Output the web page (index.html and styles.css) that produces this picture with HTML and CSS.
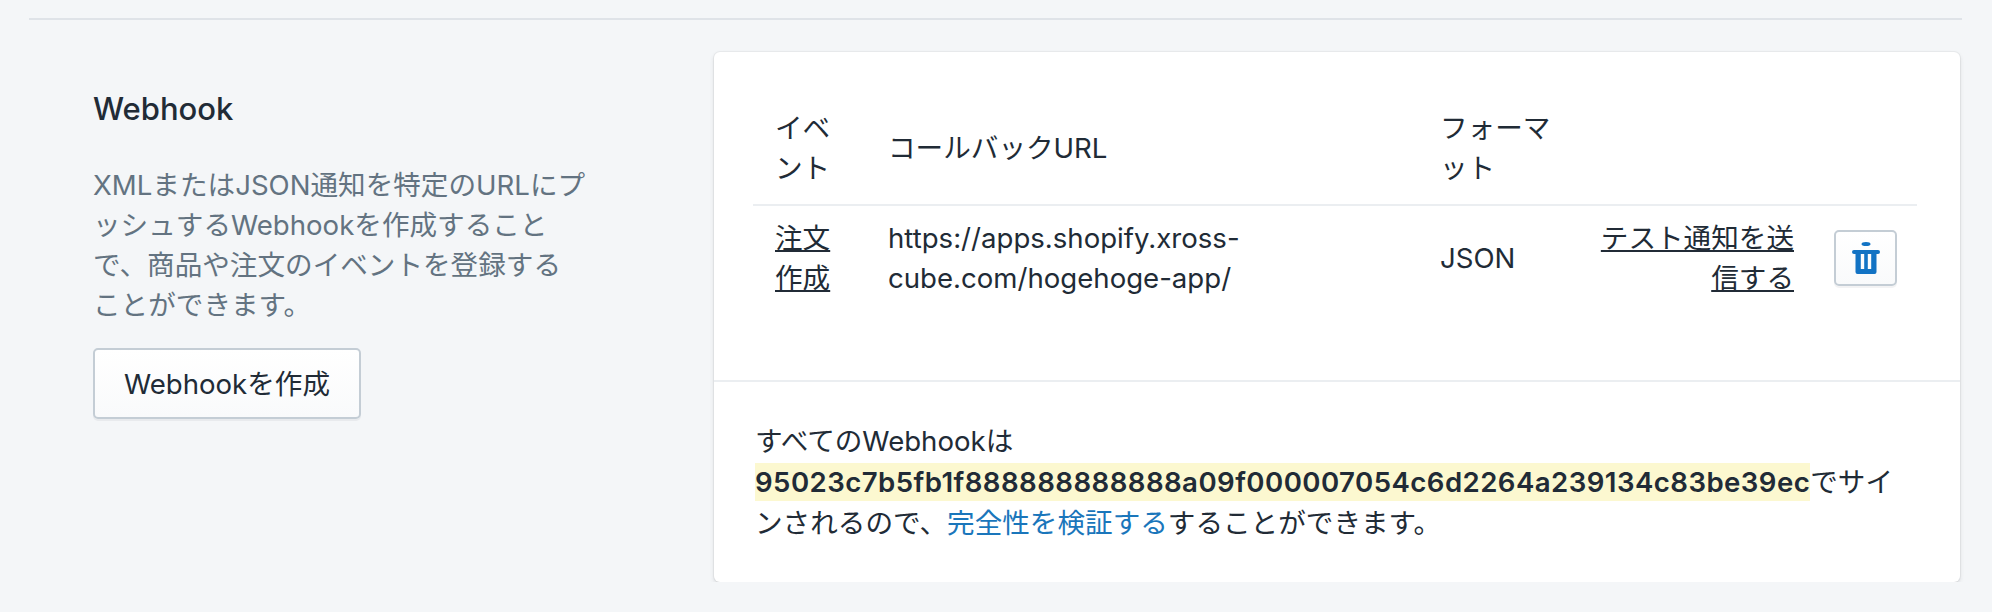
FILE: index.html
```html
<!DOCTYPE html>
<html lang="ja">
    <head>
        <title>Webhook</title>
        <meta charset="utf-8">
        <link rel="stylesheet" href="styles.css">
    </head>
    <body>
        <div class="page">
            <hr class="divider">
            <div class="section">
                <div class="intro">
                    <h2 class="intro-title">Webhook</h2>
                    <p class="intro-text">XMLまたはJSON通知を特定のURLにプッシュするWebhookを作成することで、商品や注文のイベントを登録することができます。</p>
                    <button class="btn btn-create">Webhookを作成</button>
                </div>
                <div class="card">
                    <div class="card-table">
                        <table class="hooks">
                            <colgroup>
                                <col class="col-event">
                                <col class="col-url">
                                <col class="col-format">
                                <col class="col-test">
                                <col class="col-delete">
                            </colgroup>
                            <thead>
                                <tr>
                                    <th>イベント</th>
                                    <th>コールバックURL</th>
                                    <th>フォーマット</th>
                                    <th></th>
                                    <th></th>
                                </tr>
                            </thead>
                            <tbody>
                                <tr>
                                    <td><a class="plain-link" href="#">注文作成</a></td>
                                    <td>https://apps.shopify.xross-cube.com/hogehoge-app/</td>
                                    <td>JSON</td>
                                    <td class="cell-test"><a class="plain-link" href="#">テスト通知を送信する</a></td>
                                    <td class="cell-delete">
                                        <button class="btn btn-delete" aria-label="削除">
                                            <svg width="28" height="32" viewBox="0 0 28 32">
                                                <ellipse cx="14" cy="2" rx="4.500" ry="2" fill="#1273c4"/>
                                                <path fill="#1273c4" fill-rule="evenodd" d="M0 10a2 2 0 0 1 2-2h24a2 2 0 0 1 0 4h-1.500v18a2 2 0 0 1-2 2h-17a2 2 0 0 1-2-2V12H2a2 2 0 0 1-2-2zM8.800 12v15h3.400V12zM15.800 12v15h3.400V12z"/>
                                            </svg>
                                        </button>
                                    </td>
                                </tr>
                            </tbody>
                        </table>
                    </div>
                    <div class="card-foot">
                        すべてのWebhookは<mark class="secret">95023c7b5fb1f888888888888a09f000007054c6d2264a239134c83be39ec</mark>でサインされるので、<a class="link" href="#">完全性を検証する</a>することができます。
                    </div>
                </div>
            </div>
        </div>
    </body>
</html>
```

FILE: styles.css
```css
body{
      margin: 0;
      background: #f4f6f8;
      color: #212b36;
      font-family: Inter, "Noto Sans CJK JP", sans-serif;
      font-size: 27.600px;
      line-height: 40px;
      line-break: loose;
}
.page{padding: 18px 30px 0 29px;}
.divider{
      margin: 0;
      border: 0;
      border-top: 2px solid #dfe3e8;
}
.section{
      display: flex;
      padding-top: 32px;
}
.intro{
      width: 495px;
      margin-left: 64px;
      margin-right: 126px;
      padding-top: 37px;
      flex: none;
}
.intro-title{
      margin: 0 0 36px;
      font-size: 31px;
      font-weight: 500;
}
.intro-text{
      margin: 0 0 23px;
      color: #637381;
}
.btn{
      display: flex;
      align-items: center;
      justify-content: center;
      box-sizing: border-box;
      border: 2px solid #c4cdd5;
      border-radius: 5px;
      background: linear-gradient(to bottom, #fff, #f9fafb);
      box-shadow: 0 2px 0 rgba(22, 29, 37, 0.05);
      color: #212b36;
      font: inherit;
}
.btn-create{
      width: 268px;
      height: 71px;
}
.card{
      width: 1246px;
      height: 530px;
      flex: none;
      background: #fff;
      border-radius: 6px;
      box-shadow: 0 0 0 1px rgba(63, 63, 68, 0.05), 0 2px 4px rgba(63, 63, 68, 0.15);
}
.card-table{
      height: 330px;
      padding: 39px 42px 0 39px;
      box-sizing: border-box;
      border-bottom: 2px solid #ebeef1;
}
.hooks{
      width: 1164px;
      table-layout: fixed;
      border-collapse: collapse;
}
.col-event{width: 113px;}
.col-url{width: 552px;}
.col-format{width: 160px;}
.col-test{width: 238px;}
.col-delete{width: 101px;}
.hooks th{
      padding: 17px 22px 16px;
      border-bottom: 2px solid #ebeef1;
      font-weight: 400;
      text-align: left;
}
.hooks td{
      padding: 12px 22px;
      vertical-align: middle;
}
.plain-link{
      color: inherit;
      text-decoration: underline;
}
.hooks .cell-test{text-align: right;}
.hooks .cell-delete{padding: 0 20px 0 18px;}
.btn-delete{
      width: 63px;
      height: 56px;
}
.card-foot{
      padding: 39px 45px 0 41px;
      line-height: 41px;
}
.secret{
      padding: 2px 0;
      background: #fcf8d0;
      color: inherit;
      font-weight: 600;
      letter-spacing: 0.450px;
}
.link{
      color: #1a76bb;
      text-decoration: none;
}
```
